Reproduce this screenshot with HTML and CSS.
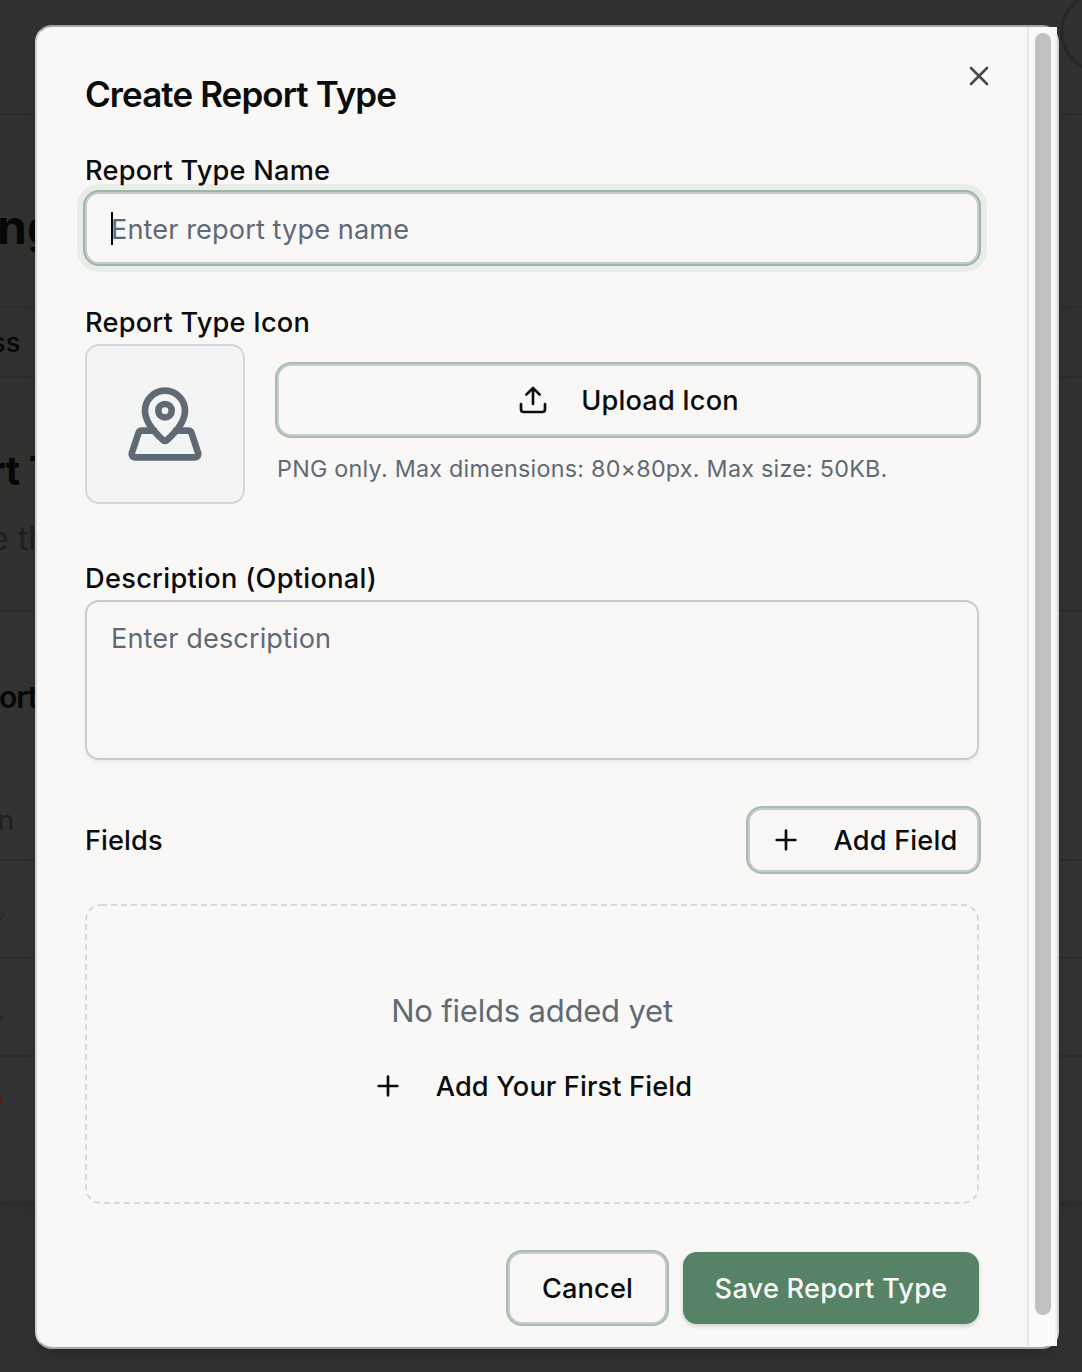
FILE: index.html
```html
<!DOCTYPE html>
<html lang="en">
<head>
<meta charset="utf-8">
<title>Create Report Type</title>
<link rel="stylesheet" href="styles.css">
</head>
<body>
<div class="page" aria-hidden="true">
  <div class="band topbar"><span class="avatar"></span></div>
  <div class="band heading"><span class="big">ng</span></div>
  <div class="band tabs"><span class="tab">ss</span></div>
  <div class="band intro"><span class="sub">rt T</span><span class="note">e th</span></div>
  <div class="band card card-head"><span class="card-title">ort</span><span class="col">n</span></div>
  <div class="band card row"><span class="mark gray"></span></div>
  <div class="band card row"><span class="mark blue"></span></div>
  <div class="band card row last"><span class="mark red"></span></div>
</div>

<main class="dialog" role="dialog" aria-labelledby="title">
  <form class="content">
    <h1 class="title" id="title"><span class="t-title">Create Report Type</span></h1>
    <button class="close" type="button" aria-label="Close">
      <svg class="icon" viewBox="0 0 24 24"><path d="M18 6 6 18M6 6l12 12"/></svg>
    </button>

    <div class="label"><span class="t-name">Report Type Name</span></div>
    <div class="input focused"><span class="caret"></span><span class="placeholder t-ph1">Enter report type name</span></div>

    <div class="label icon-label"><span class="t-icon">Report Type Icon</span></div>
    <div class="icon-row">
      <div class="preview">
        <svg class="pin" viewBox="0 0 24 24"><path d="M18 8c0 3.613-3.869 7.429-5.393 8.795a1 1 0 0 1-1.214 0C9.87 15.429 6 11.613 6 8a6 6 0 0 1 12 0"/><circle cx="12" cy="8" r="2"/><path d="M8.714 14h-3.71a1 1 0 0 0-.948.683l-2.004 6A1 1 0 0 0 3 22h18a1 1 0 0 0 .948-1.316l-2-6a1 1 0 0 0-.949-.684h-3.712"/></svg>
      </div>
      <div class="upload-col">
        <button class="btn outline upload" type="button">
          <svg class="icon" viewBox="0 0 24 24"><path d="M12 3v12M17 8l-5-5-5 5M21 15v4a2 2 0 0 1-2 2H5a2 2 0 0 1-2-2v-4"/></svg>
          <span class="t-upload">Upload Icon</span>
        </button>
        <div class="hint"><span class="t-hint">PNG only. Max dimensions: 80×80px. Max size: 50KB.</span></div>
      </div>
    </div>

    <div class="label desc-label"><span class="t-desc">Description (Optional)</span></div>
    <div class="textarea"><span class="placeholder t-ph2">Enter description</span></div>

    <div class="fields-head">
      <span class="label"><span class="t-fields">Fields</span></span>
      <button class="btn outline add" type="button">
        <svg class="icon" viewBox="0 0 24 24"><path d="M5 12h14M12 5v14"/></svg>
        <span class="t-add">Add Field</span>
      </button>
    </div>
    <div class="empty">
      <svg class="dash" width="894" height="300"><rect x="1" y="1" width="892" height="298" rx="15"/></svg>
      <div class="empty-text"><span class="t-empty">No fields added yet</span></div>
      <button class="btn ghost" type="button">
        <svg class="icon" viewBox="0 0 24 24"><path d="M5 12h14M12 5v14"/></svg>
        <span class="t-first">Add Your First Field</span>
      </button>
    </div>

    <div class="footer">
      <button class="btn outline cancel" type="button"><span class="t-cancel">Cancel</span></button>
      <button class="btn primary" type="button"><span class="t-save">Save Report Type</span></button>
    </div>
  </form>
  <div class="scrollbar"><div class="thumb"></div></div>
</main>
</body>
</html>
```
FILE: styles.css
```css
* { box-sizing: border-box; }

body {
  margin: 0;
  height: 1372px;
  overflow: hidden;
  position: relative;
  background: #31312f;
  color: #0a0c0e;
  font-family: Inter, "Liberation Sans", sans-serif;
  font-size: 27.2px;
}

/* Dimmed page behind the dialog */
.page { position: absolute; inset: 0; overflow: hidden; color: #060707; }
.band { border-bottom: 2px solid #2b2c2c; white-space: nowrap; position: relative; }
.topbar { height: 115px; }
.avatar {
  position: absolute; left: 1060px; top: -8px;
  width: 80px; height: 80px;
  border: 3px solid #242827; border-radius: 50%;
}
.heading { height: 193px; padding-top: 84px; }
.big { display: block; margin-left: -3px; font-size: 48px; line-height: 56px; font-weight: 700; }
.tabs { height: 70px; padding-top: 18px; }
.tab { display: block; margin-left: -9px; line-height: 34px; font-weight: 500; }
.intro { height: 234px; padding-top: 69px; }
.sub { display: block; margin-left: -11px; font-size: 40px; line-height: 48px; font-weight: 700; letter-spacing: -.5px; }
.note { display: block; margin: 24px 0 0 -10px; font-size: 32px; line-height: 40px; color: #1d2022; }
.card { background: #333; }
.card-head { height: 249px; padding-top: 67px; }
.card-title { display: block; margin-left: -1px; font-size: 30px; line-height: 36px; font-weight: 600; letter-spacing: -1px; }
.col { display: block; margin: 89px 0 0 -2px; line-height: 34px; color: #1d2022; }
.row { height: 98px; display: flex; align-items: center; }
.last { height: 146px; align-items: flex-start; padding-top: 39px; box-shadow: 0 3px 5px #2a2a29; }
.gray { width: 14px; height: 14px; margin-left: -12px; border: 1px solid #25292b; background: #2f3233; transform: translateY(6px) rotate(45deg); }
.blue { width: 8px; height: 8px; margin-left: -6px; background: #25263c; transform: translateY(11px) rotate(45deg); }
.red { width: 1px; height: 9px; margin-top: 1px; background: #5a1c08; }

/* Dialog shell */
.dialog {
  position: absolute; left: 35px; top: 25px;
  width: 1024px; height: 1324px;
  display: flex;
  border: 2px solid #ced2d5;
  border-top-color: #a1a3a4;
  border-bottom-color: #a7a9a9;
  border-radius: 17px;
  background: #f9f8f6;
  box-shadow: 0 10px 16px -4px rgba(0, 0, 0, .18);
}
.content { position: relative; width: 990px; padding: 49px 48px 0; }
.scrollbar {
  width: 30px; height: 1319px;
  padding: 6px 6px 0;
  border-left: 2px solid #e7e7e7;
  border-right: 2px solid #f2f2f2;
  background: #fafafa;
}
.thumb { width: 16px; height: 1282px; border-radius: 8px; background: #c1c1c1; }

.title { margin: 0 0 44px; font-size: 35px; line-height: 37px; height: 36px; font-weight: 600; }
.label { height: 28px; line-height: 29px; font-weight: 500; white-space: nowrap; }
.icon { width: 32px; height: 32px; flex: none; }
.icon, .pin {
  fill: none; stroke: currentColor;
  stroke-width: 2; stroke-linecap: round; stroke-linejoin: round;
}
.close {
  position: absolute; left: 926px; top: 33px;
  width: 32px; height: 32px; padding: 0;
  border: 0; background: none; color: #4a4b4c;
}

.input, .textarea {
  border: 2px solid #c7ccd0; border-radius: 14px;
  padding: 0 24px;
  background: #f9f8f6;
}
.placeholder { color: #606a74; white-space: nowrap; }
.input { display: flex; align-items: center; height: 72px; margin-top: 8px; line-height: 40px; }
.input .placeholder { padding-top: 4px; }
.focused { box-shadow: 0 0 0 2px #9db7a5, 0 0 0 8px #e9ece8; }
.caret { width: 2px; height: 33px; margin-right: -2px; background: #000; }
.textarea {
  height: 160px; margin-top: 8px; padding-top: 17px; line-height: 40px;
  box-shadow: 0 2px 4px rgba(0, 0, 0, .06);
}

.icon-label { margin-top: 44px; }
.icon-row { display: flex; gap: 32px; margin-top: 8px; }
.preview {
  display: grid; place-items: center;
  width: 160px; height: 160px;
  border: 2px solid #d4d8dc; border-radius: 14px;
  background: #f3f5f4; color: #606a74;
}
.pin { width: 80px; height: 80px; }
.upload-col { width: 702px; padding-top: 20px; }
.hint { height: 32px; margin-top: 17px; font-size: 23.3px; line-height: 32px; color: #606a74; white-space: nowrap; }
.desc-label { margin-top: 60px; }

.btn {
  display: flex; align-items: center; justify-content: center; gap: 32px;
  height: 72px; padding: 0; border: 0; border-radius: 14px;
  background: none; color: #0a0c0e;
  font: 500 27.2px/40px Inter, "Liberation Sans", sans-serif;
  white-space: nowrap;
}
.btn span { padding-top: 2px; }
.outline { border: 2px solid #c7ccd0; box-shadow: 0 0 0 2px #a6bdac; background: #f9f8f6; }
.upload { width: 100%; }
.add { width: 231px; height: 64px; }
.ghost { height: 64px; margin: 23px auto 0; }
.cancel { width: 159px; }
.primary { width: 296px; background: #568366; color: #f9f8f6; box-shadow: 0 2px 4px rgba(0, 0, 0, .18); }

.fields-head { display: flex; align-items: center; justify-content: space-between; height: 64px; margin-top: 48px; }
.empty { position: relative; height: 300px; margin-top: 32px; padding-top: 87px; }
.dash { position: absolute; inset: 0; fill: none; stroke: #d6dadd; stroke-width: 2; stroke-dasharray: 6 4; }
.empty-text { height: 40px; text-align: center; font-size: 31px; line-height: 40px; color: #606a74; }
.footer { display: flex; justify-content: flex-end; gap: 16px; margin-top: 48px; }

.t-title { letter-spacing: -.92px; }
.t-name, .t-icon, .t-save { letter-spacing: .22px; }
.t-first { letter-spacing: .12px; }
.t-upload, .t-add, .t-cancel { letter-spacing: .15px; }
.t-desc { letter-spacing: .3px; }
.t-ph1, .t-ph2, .t-fields { letter-spacing: .08px; }
.t-hint { letter-spacing: .25px; }
.t-empty { letter-spacing: -.2px; }
```
